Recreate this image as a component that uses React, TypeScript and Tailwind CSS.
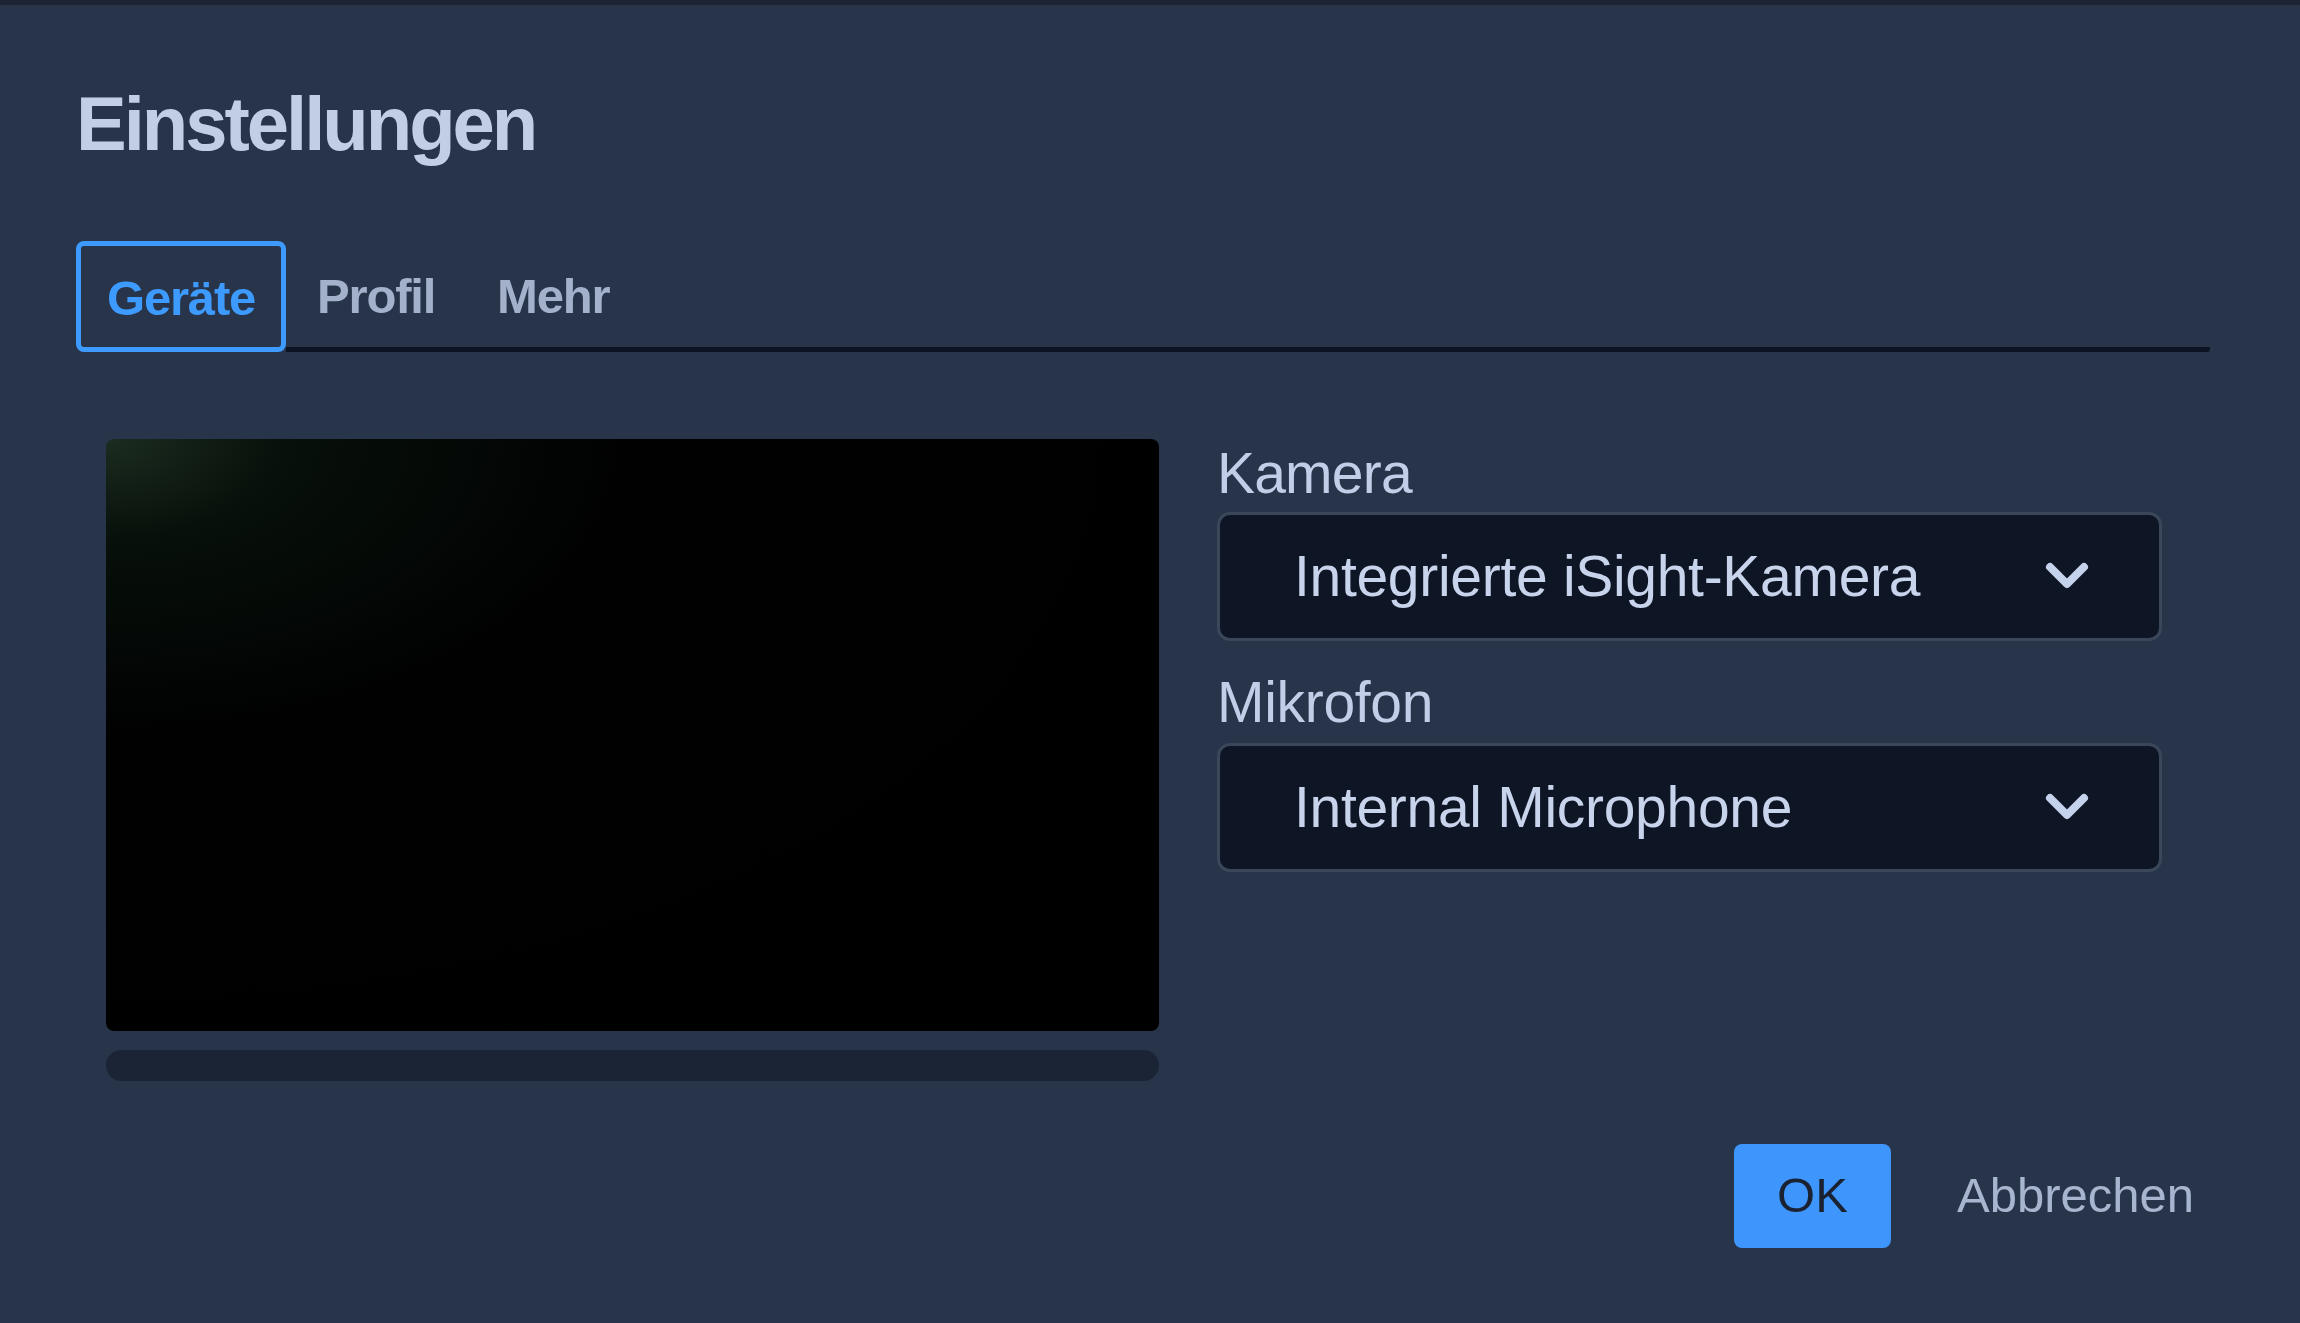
import { useState } from "react";

const tabs = ["Geräte", "Profil", "Mehr"];

function Chevron() {
  return (
    <svg width="44" height="30" viewBox="0 0 44 30" fill="none">
      <path d="M5 5 L22 22 L39 5" stroke="#c5d2ec" strokeWidth="8" strokeLinecap="round" strokeLinejoin="round" />
    </svg>
  );
}

function Select({ value }: { value: string }) {
  return (
    <div className="flex items-center justify-between h-[129px] rounded-[13px] border-[3px] border-[#3a475b] bg-[#0e1524] pl-[74px] pr-[70px]">
      <span className="text-[57px] leading-none tracking-[-0.3px] text-[#c8d4ec]">{value}</span>
      <Chevron />
    </div>
  );
}

export default function App() {
  const [tab, setTab] = useState(0);

  return (
    <div className="h-[1323px] w-full bg-[#1c2433] pt-[5px] font-['Liberation_Sans',Arial,sans-serif]">
      <div className="h-full bg-[#283449] pl-[76px] pr-[90px] pt-[81px]">
        <h1 className="h-[76px] text-[76px] leading-none font-bold tracking-[-3px] text-[#c2cee6]">Einstellungen</h1>

        <div className="mt-[79px] flex items-stretch h-[111px]">
          {tabs.map((t, i) =>
            i === tab ? (
              <button key={t} onClick={() => setTab(i)} className="px-[26px] pt-[4px] rounded-[8px] border-[5px] border-[#3d9bff] text-[49px] leading-none font-bold tracking-[-1.2px] text-[#3d9bff]">
                {t}
              </button>
            ) : (
              <button key={t} onClick={() => setTab(i)} className="px-[31px] pt-[4px] border-b-[5px] border-[#0c1322] text-[49px] leading-none font-bold tracking-[-1.2px] text-[#a4b1ca]">
                {t}
              </button>
            )
          )}
          <div className="flex-1 border-b-[5px] border-[#0c1322] rounded-br-[3px]" />
        </div>

        <div className="mt-[87px] flex pl-[30px]">
          <div className="w-[1053px]">
            <div className="h-[592px] rounded-[8px] bg-[radial-gradient(ellipse_at_top_left,#1c2c20_0%,#07100a_12%,#010102_35%,#000_100%)]" />
            <div className="mt-[19px] h-[31px] rounded-full bg-[#1b2434]" />
          </div>

          <div className="ml-[58px] w-[945px] pt-[6px]">
            <div className="h-[56px] text-[57px] leading-[56px] tracking-[-0.8px] text-[#c2cee7]">Kamera</div>
            <div className="mt-[11px]">
              <Select value="Integrierte iSight-Kamera" />
            </div>
            <div className="mt-[33px] h-[56px] text-[57px] leading-[56px] tracking-[-0.3px] text-[#c2cee7]">Mikrofon</div>
            <div className="mt-[13px]">
              <Select value="Internal Microphone" />
            </div>
          </div>
        </div>

        <div className="mt-[63px] flex justify-end items-center gap-[36px] -mr-[14px]">
          <button className="w-[157px] h-[104px] rounded-[8px] bg-[#3e95fb] text-[49px] text-[#1a2232]">OK</button>
          <button className="h-[104px] px-[30px] text-[49px] text-[#a8b5cf]">Abbrechen</button>
        </div>
      </div>
    </div>
  );
}
